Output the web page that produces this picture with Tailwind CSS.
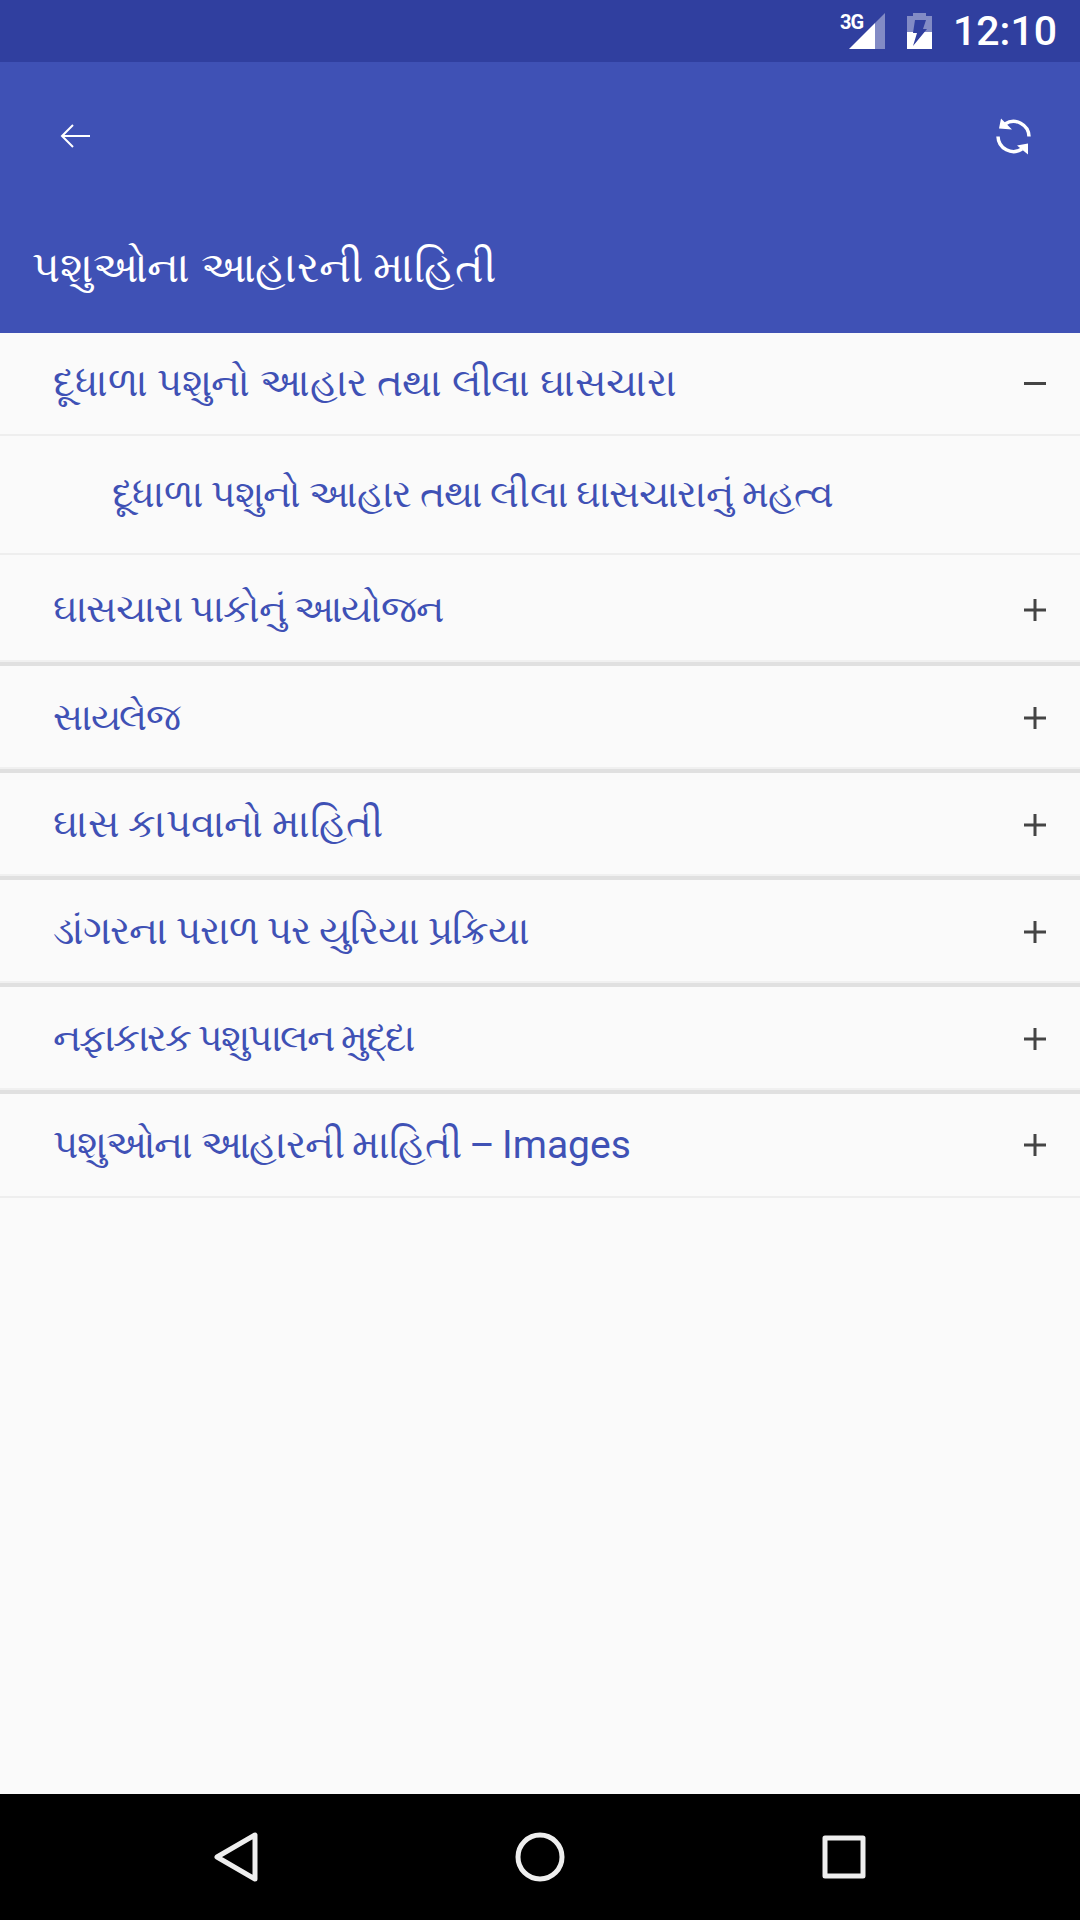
<!DOCTYPE html>
<html lang="gu">
<head>
<meta charset="UTF-8">
<title>પશુઓના આહારની માહિતી</title>
<script src="https://cdn.jsdelivr.net/npm/@tailwindcss/browser@4"></script>
</head>
<body class="bg-[#fafafa]">
<div class="w-[1080px] h-[1920px] flex flex-col font-['Roboto',sans-serif] overflow-hidden">

    <!-- status bar -->
    <div class="h-[62px] shrink-0 bg-[#303f9f] flex items-center justify-end pr-[23px] text-white">
        <div class="relative w-[36px] h-[36px] mr-[22px]">
            <svg width="36" height="36" viewBox="0 0 36 36" class="absolute left-0 top-0">
                <path d="M36 0V36H26V10Z" fill="#fff" fill-opacity=".4"/>
                <path d="M26 10V36H0Z" fill="#fff"/>
            </svg>
            <span class="absolute left-[-9px] top-[-1px] text-[20px] leading-[20px] font-bold tracking-[-1px]">3G</span>
        </div>
        <svg width="25" height="36" viewBox="0 0 25 36" class="mr-[21px]">
            <path d="M6 0H19V3H25V36H0V3H6Z" fill="#fff" fill-opacity=".4"/>
            <path d="M0 19H25V36H0Z" fill="#fff"/>
            <path d="M8 7H19L16 16H20L6 33L10 20H6Z" fill="#303f9f"/>
        </svg>
        <span class="text-[41px] leading-[62px] font-medium">12:10</span>
    </div>

    <!-- app bar -->
    <div class="h-[271px] shrink-0 bg-[#3f51b5] flex flex-col">
        <div class="h-[147px] flex items-center justify-between pl-[60px] pr-[48px]">
            <svg width="30" height="24" viewBox="0 0 30 24" fill="none" stroke="#fff" stroke-width="2">
                <path d="M30 12H2M13 1L2 12L13 23"/>
            </svg>
            <svg width="36" height="38" viewBox="0 0 36 38" fill="none">
                <path d="M9 7A15.5 15.5 0 0 1 33 19.5" stroke="#fff" stroke-width="3.5"/>
                <path d="M26 32A15.5 15.5 0 0 1 2 19.5" stroke="#fff" stroke-width="3.5"/>
                <path d="M5 1.5L3 11.5L16 12.5Z M32 26.5L32 37.5L21 28.5Z" fill="#fff"/>
            </svg>
        </div>
        <h1 class="pl-[32px] mt-[28px] text-white text-[43px] leading-[60px] tracking-[-0.2px] font-normal">પશુઓના આહારની માહિતી</h1>
    </div>

    <!-- list -->
    <div class="text-[#3f51b5] text-[39px] tracking-[-0.2px]">
        <div class="h-[103px] pl-[53px] pr-[34px] flex items-center justify-between border-b-2 border-[#eeeeee]">
            <span>દૂધાળા પશુનો આહાર તથા લીલા ઘાસચારા</span>
            <svg width="22" height="22" viewBox="0 0 22 22" fill="#444"><rect x="0" y="9" width="22" height="3"/></svg>
        </div>
        <div class="h-[119px] pl-[112px] flex items-center border-b-2 border-[#eeeeee]">
            <span class="text-[38px] tracking-[-0.7px]">દૂધાળા પશુનો આહાર તથા લીલા ઘાસચારાનું મહત્વ</span>
        </div>
        <div class="h-[111px] pl-[53px] pr-[34px] pt-[2px] flex items-center justify-between border-b-4 border-[#e0e0e0] shadow-[inset_0_-2px_0_#f0f0f0]">
            <span class="text-[38px] tracking-[-1.1px]">ઘાસચારા પાકોનું આયોજન</span>
            <svg width="22" height="22" viewBox="0 0 22 22" fill="#444"><path d="M0 9.5H9.5V0H12.5V9.5H22V12.5H12.5V22H9.5V12.5H0Z"/></svg>
        </div>
        <div class="h-[107px] pl-[53px] pr-[34px] flex items-center justify-between border-b-4 border-[#e0e0e0] shadow-[inset_0_-2px_0_#f0f0f0]">
            <span class="text-[37px] tracking-[-1.5px]">સાયલેજ</span>
            <svg width="22" height="22" viewBox="0 0 22 22" fill="#444"><path d="M0 9.5H9.5V0H12.5V9.5H22V12.5H12.5V22H9.5V12.5H0Z"/></svg>
        </div>
        <div class="h-[107px] pl-[53px] pr-[34px] flex items-center justify-between border-b-4 border-[#e0e0e0] shadow-[inset_0_-2px_0_#f0f0f0]">
            <span class="tracking-[-0.4px]">ઘાસ કાપવાનો માહિતી</span>
            <svg width="22" height="22" viewBox="0 0 22 22" fill="#444"><path d="M0 9.5H9.5V0H12.5V9.5H22V12.5H12.5V22H9.5V12.5H0Z"/></svg>
        </div>
        <div class="h-[107px] pl-[53px] pr-[34px] flex items-center justify-between border-b-4 border-[#e0e0e0] shadow-[inset_0_-2px_0_#f0f0f0]">
            <span class="tracking-[-0.9px]">ડાંગરના પરાળ પર યુરિયા પ્રક્રિયા</span>
            <svg width="22" height="22" viewBox="0 0 22 22" fill="#444"><path d="M0 9.5H9.5V0H12.5V9.5H22V12.5H12.5V22H9.5V12.5H0Z"/></svg>
        </div>
        <div class="h-[107px] pl-[53px] pr-[34px] flex items-center justify-between border-b-4 border-[#e0e0e0] shadow-[inset_0_-2px_0_#f0f0f0]">
            <span class="text-[38px] tracking-[-1.9px]">નફાકારક પશુપાલન મુદ્દા</span>
            <svg width="22" height="22" viewBox="0 0 22 22" fill="#444"><path d="M0 9.5H9.5V0H12.5V9.5H22V12.5H12.5V22H9.5V12.5H0Z"/></svg>
        </div>
        <div class="h-[104px] pl-[53px] pr-[34px] flex items-center justify-between border-b-2 border-[#eeeeee]">
            <span class="tracking-[-1.2px]">પશુઓના આહારની માહિતી – <span class="tracking-normal">Images</span></span>
            <svg width="22" height="22" viewBox="0 0 22 22" fill="#444"><path d="M0 9.5H9.5V0H12.5V9.5H22V12.5H12.5V22H9.5V12.5H0Z"/></svg>
        </div>
    </div>

    <div class="flex-1"></div>

    <!-- nav bar -->
    <div class="h-[126px] shrink-0 bg-black flex items-center justify-center">
        <div class="w-[304px] flex justify-center">
            <svg width="44" height="50" viewBox="0 0 44 50" fill="none" stroke="#eee" stroke-width="5" stroke-linejoin="round"><path d="M41 3V47L3 25Z"/></svg>
        </div>
        <div class="w-[304px] flex justify-center">
            <svg width="50" height="50" viewBox="0 0 50 50" fill="none" stroke="#eee" stroke-width="5"><circle cx="25" cy="25" r="22"/></svg>
        </div>
        <div class="w-[304px] flex justify-center">
            <svg width="44" height="44" viewBox="0 0 44 44" fill="none" stroke="#eee" stroke-width="5" stroke-linejoin="round"><rect x="3" y="3" width="38" height="38"/></svg>
        </div>
    </div>
</div>
</body>
</html>
